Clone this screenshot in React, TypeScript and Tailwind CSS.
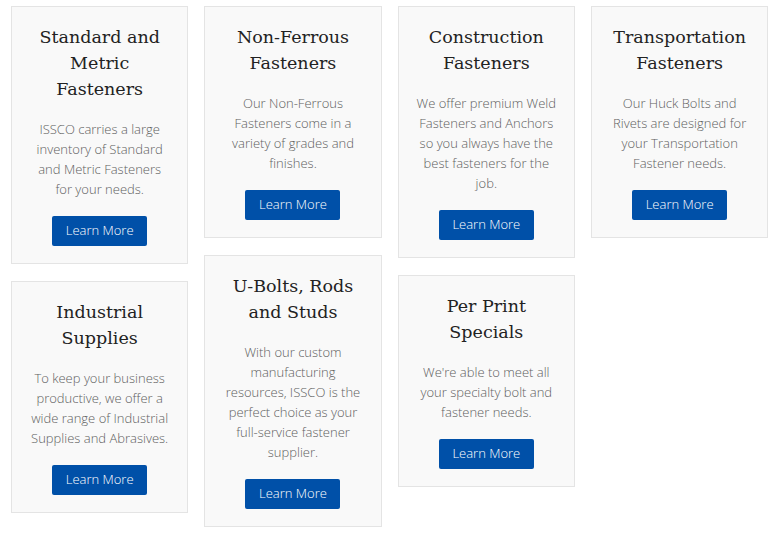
import React from "react";

type Card = { title: string[]; body: string[] };

const columns: Card[][] = [
  [
    {
      title: ["Standard and", "Metric", "Fasteners"],
      body: ["ISSCO carries a large", "inventory of Standard", "and Metric Fasteners", "for your needs."],
    },
    {
      title: ["Industrial", "Supplies"],
      body: ["To keep your business", "productive, we offer a", "wide range of Industrial", "Supplies and Abrasives."],
    },
  ],
  [
    {
      title: ["Non-Ferrous", "Fasteners"],
      body: ["Our Non-Ferrous", "Fasteners come in a", "variety of grades and", "finishes."],
    },
    {
      title: ["U-Bolts, Rods", "and Studs"],
      body: ["With our custom", "manufacturing", "resources, ISSCO is the", "perfect choice as your", "full-service fastener", "supplier."],
    },
  ],
  [
    {
      title: ["Construction", "Fasteners"],
      body: ["We offer premium Weld", "Fasteners and Anchors", "so you always have the", "best fasteners for the", "job."],
    },
    {
      title: ["Per Print", "Specials"],
      body: ["We're able to meet all", "your specialty bolt and", "fastener needs."],
    },
  ],
  [
    {
      title: ["Transportation", "Fasteners"],
      body: ["Our Huck Bolts and", "Rivets are designed for", "your Transportation", "Fastener needs."],
    },
  ],
];

function CardView({ card }: { card: Card }) {
  return (
    <div className="flex flex-col items-center border border-[#e4e4e4] bg-[#f9f9f9] px-[10px] py-[17px] text-center">
      <h3
        className="text-[17.5px] leading-[26px] text-[#222222]"
        style={{ fontFamily: '"DejaVu Serif", "Liberation Serif", serif' }}
      >
        {card.title.map((t, i) => (
          <span key={i} className="block whitespace-nowrap">
            {t}
          </span>
        ))}
      </h3>
      <p
        className="mt-[17px] text-[13px] font-light leading-[20px] text-[#606060]"
        style={{ fontFamily: '"Open Sans", sans-serif' }}
      >
        {card.body.map((t, i) => (
          <span key={i} className="block whitespace-nowrap">
            {t}
          </span>
        ))}
      </p>
      <button
        className="mt-[17px] h-[30px] w-[95px] rounded-[2px] bg-[#0050a8] text-[13px] font-light text-white"
        style={{ fontFamily: '"Open Sans", sans-serif' }}
      >
        Learn More
      </button>
    </div>
  );
}

export default function App() {
  return (
    <div className="min-h-[534px] w-[781px] bg-white pl-[11px] pt-[6px]">
      <div className="grid grid-cols-[177.33px_177.33px_177.33px_177.33px] items-start gap-x-[16px]">
        {columns.map((col, ci) => (
          <div key={ci} className="flex flex-col gap-[17px]">
            {col.map((c, i) => (
              <CardView key={i} card={c} />
            ))}
          </div>
        ))}
      </div>
    </div>
  );
}
